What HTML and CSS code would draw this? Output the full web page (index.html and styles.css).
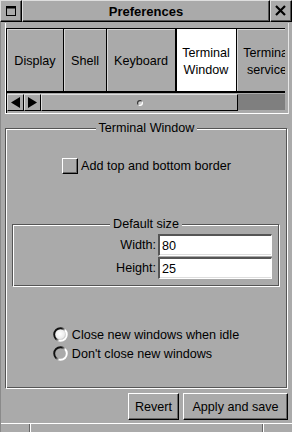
FILE: index.html
```html
<!DOCTYPE html>
<html>
<head>
<meta charset="utf-8">
<link rel="stylesheet" href="styles.css">
</head>
<body>
<svg class="defs" width="0" height="0" aria-hidden="true">
  <defs>
    <linearGradient id="ring" x1="0" y1="0.2" x2="1" y2="0.8">
      <stop offset="0.35" stop-color="#111"/>
      <stop offset="0.5" stop-color="#777"/>
      <stop offset="0.65" stop-color="#fff"/>
    </linearGradient>
    <radialGradient id="ball" cx="0.45" cy="0.45" r="0.6">
      <stop offset="0" stop-color="#fff"/>
      <stop offset="0.65" stop-color="#ececec"/>
      <stop offset="1" stop-color="#a8a8a8"/>
    </radialGradient>
    <linearGradient id="grip" x1="0" y1="0" x2="1" y2="1">
      <stop offset="0.3" stop-color="#333"/>
      <stop offset="0.7" stop-color="#fff"/>
    </linearGradient>
  </defs>
</svg>
<div class="window">
  <div class="titlebar">
    <div class="tb-box tb-icon">
      <svg width="10" height="10" viewBox="0 0 10 10"><rect x="0.5" y="0.5" width="9" height="9" fill="none" stroke="#000"/><rect x="0" y="0" width="10" height="2.5" fill="#000"/></svg>
    </div>
    <div class="tb-box tb-title">Preferences</div>
    <div class="tb-box tb-icon">
      <svg width="11" height="11" viewBox="0 0 11 11"><path d="M1 1 L10 10 M10 1 L1 10" stroke="#000" stroke-width="2.2"/></svg>
    </div>
  </div>
  <div class="main">
    <div class="tabframe">
      <div class="notebook">
        <div class="tabs">
          <div class="tab w57">Display</div>
          <div class="tab w43">Shell</div>
          <div class="tab w69">Keyboard</div>
          <div class="tab w61 active">Terminal<br>Window</div>
          <div class="tab w61">Terminal<br>service</div>
        </div>
        <div class="scrollrow">
          <div class="sbtn"><svg width="9" height="11" viewBox="0 0 9 11"><path d="M0 5.5 L9 0 L9 11 Z" fill="#000"/></svg></div>
          <div class="sbtn"><svg width="9" height="11" viewBox="0 0 9 11"><path d="M9 5.5 L0 0 L0 11 Z" fill="#000"/></svg></div>
          <div class="slider"><svg width="6" height="6" viewBox="0 0 6 6"><circle cx="3" cy="3" r="2.4" fill="#ccc" stroke="url(#grip)" stroke-width="1.2"/></svg></div>
          <div class="trough"></div>
        </div>
      </div>
    </div>

    <div class="group g1">
      <div class="group-head"><span class="group-title">Terminal Window</span></div>
      <div class="group-body g1-body">
        <div class="checkrow">
          <span class="checkbox"></span>
          <span>Add top and bottom border</span>
        </div>

        <div class="group g2">
          <div class="group-head"><span class="group-title">Default size</span></div>
          <div class="group-body g2-body">
            <span class="flabel">Width:</span>
            <div class="field">80</div>
            <span class="flabel">Height:</span>
            <div class="field">25</div>
          </div>
        </div>

        <div class="radios">
          <div class="radiorow">
            <svg class="radio" width="15" height="15" viewBox="0 0 15 15"><circle cx="7.5" cy="7.5" r="5.8" fill="url(#ball)"/><circle cx="7.5" cy="7.5" r="6.3" fill="none" stroke="url(#ring)" stroke-width="1.9"/></svg>
            <span>Close new windows when idle</span>
          </div>
          <div class="radiorow">
            <svg class="radio" width="15" height="15" viewBox="0 0 15 15"><circle cx="7.5" cy="7.5" r="6.3" fill="none" stroke="url(#ring)" stroke-width="1.9"/></svg>
            <span>Don't close new windows</span>
          </div>
        </div>
      </div>
    </div>

    <div class="buttons">
      <button class="btn btn-revert">Revert</button>
      <button class="btn btn-apply">Apply and save</button>
    </div>

    <div class="statusbar">
      <div class="sec sec1"></div>
      <div class="sec sec2"></div>
      <div class="sec sec3"></div>
    </div>
  </div>
</div>
</body>
</html>
```
FILE: styles.css
```css
* { box-sizing: border-box; }
html, body { margin: 0; padding: 0; }
body {
  width: 292px;
  height: 432px;
  overflow: hidden;
  background: #aaaaaa;
  color: #000;
  font-family: "Liberation Sans", Arial, sans-serif;
  font-size: 12.6px;
}
.defs { position: absolute; width: 0; height: 0; }

.window { display: flex; flex-direction: column; height: 432px; }

/* title bar */
.titlebar { display: flex; height: 22px; flex: none; }
.tb-box {
  height: 22px;
  border: 1px solid;
  border-color: #dedede #000 #000 #dedede;
  box-shadow: inset -1px -1px 0 #555;
  display: flex;
  align-items: center;
  justify-content: center;
}
.tb-icon { width: 22px; flex: none; padding: 0 1px 1px 0; }
.tb-title { flex: 1; font-weight: bold; font-size: 13px; }

/* main */
.main {
  flex: 1;
  min-height: 0;
  display: flex;
  flex-direction: column;
  border-left: 1px solid #8a8a8a;
}

.tabframe {
  margin: 1px 3px 0 4px;
  height: 91px;
  padding: 5px 3px 0 0;
  border-left: 1px solid #fff;
  border-right: 1px solid #e6e6e6;
  border-bottom: 1px solid #fff;
}
.notebook { border-left: 1px solid #000; }
.tabs {
  display: flex;
  height: 65px;
  border-top: 1px solid #000;
  border-bottom: 2px solid #000;
  overflow: hidden;
}
.tab {
  flex: none;
  height: 100%;
  border-right: 1px solid #000;
  box-shadow: inset 1px 1px 0 #d6d6d6;
  display: flex;
  align-items: center;
  justify-content: center;
  text-align: center;
  line-height: 17px;
  padding-top: 3px;
  white-space: nowrap;
}
.tab.active { background: #fff; box-shadow: inset 1px 0 0 #000; }
.w57 { width: 57px; }
.w43 { width: 43px; }
.w69 { width: 69px; }
.w61 { width: 61px; }

.scrollrow { display: flex; height: 20px; padding: 1px 0 2px; }
.sbtn {
  width: 17px;
  height: 17px;
  flex: none;
  border: 1px solid;
  border-color: #dedede #000 #000 #dedede;
  display: flex;
  align-items: center;
  justify-content: center;
}
.slider {
  width: 197px;
  height: 17px;
  flex: none;
  border: 1px solid;
  border-color: #dedede #000 #000 #dedede;
  display: flex;
  align-items: center;
  justify-content: center;
}
.trough { flex: 1; height: 16px; background: #7f7f7f; }

/* group boxes */
.group { display: flex; flex-direction: column; }
.group-head { display: flex; height: 14px; }
.group-head::before,
.group-head::after {
  content: "";
  flex: 1;
  margin-top: 7px;
  border-top: 1px solid #555;
}
.group-head::before {
  border-left: 1px solid #555;
  box-shadow: inset 1px 1px 0 #fff;
}
.group-head::after {
  border-right: 1px solid #fff;
  box-shadow: inset -1px 0 0 #555, inset 0 1px 0 #fff;
}
.group-title { padding: 0 3px; line-height: 14px; white-space: nowrap; }
.group-body {
  border-style: solid;
  border-width: 0 1px 1px 1px;
  border-color: #fff #fff #fff #555;
  box-shadow: inset 1px 0 0 #fff, inset -1px -1px 0 #555;
}

.g1 { margin: 7px 4px 0 4px; }
.g1-body { height: 254px; display: flex; flex-direction: column; }

.checkrow {
  margin-top: 23px;
  height: 16px;
  display: flex;
  align-items: center;
  justify-content: center;
  gap: 3px;
}
.checkbox {
  width: 16px;
  height: 16px;
  border: 1px solid;
  border-color: #fff #000 #000 #fff;
  box-shadow: inset -1px -1px 0 #666;
}

.g2 { margin: 43px 7px 0 6px; }
.g2-body {
  display: grid;
  grid-template-columns: 1fr 114px;
  column-gap: 2px;
  row-gap: 1px;
  padding: 3px 7px 7px 0;
  align-items: center;
}
.flabel { text-align: right; }
.field {
  height: 22px;
  background: #fff;
  border-style: solid;
  border-width: 2px 1px 1px 2px;
  border-color: #555 #fff #fff #555;
  box-shadow: inset 0 -1px 0 #ddd;
  padding-left: 2px;
  display: flex;
  align-items: center;
}

.radios {
  margin-top: 40px;
  align-self: center;
  display: flex;
  flex-direction: column;
  padding-right: 1px;
}
.radiorow { height: 19px; display: flex; align-items: flex-start; gap: 4px; }
.radio { flex: none; }
.radiorow span { line-height: 16px; }

/* buttons */
.buttons {
  display: flex;
  justify-content: flex-end;
  gap: 4px;
  margin: 4px 4px 0 0;
}
.btn {
  height: 27px;
  padding: 0;
  margin: 0;
  background: #aaaaaa;
  color: #000;
  font: inherit;
  border: 1px solid;
  border-color: #fff #000 #000 #fff;
  box-shadow: inset -1px -1px 0 #666;
  border-radius: 0;
}
.btn-revert { width: 51px; }
.btn-apply { width: 105px; }

/* status bar */
.statusbar {
  flex: 1;
  margin-top: 3px;
  border-top: 1px solid #fff;
  display: flex;
}
.sec1 { width: 29px; border-right: 1px solid #666; }
.sec2 { flex: 1; border-left: 1px solid #fff; border-right: 1px solid #666; }
.sec3 { width: 29px; border-left: 1px solid #fff; }
```
